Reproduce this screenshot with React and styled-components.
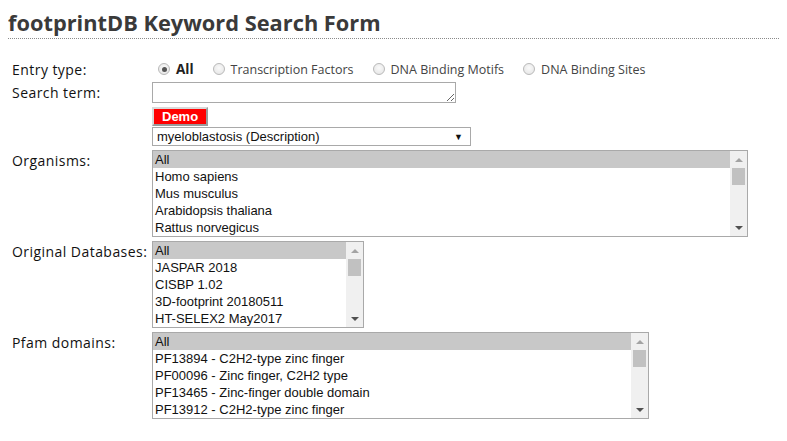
import React from 'react';
import styled, { createGlobalStyle } from 'styled-components';

const GlobalStyle = createGlobalStyle`
  body {
    margin: 8px;
    background: #fff;
    font-family: 'Open Sans', 'Noto Sans', sans-serif;
    color: #222;
  }
`;

const Title = styled.h1`
  margin: 0;
  padding: 0 0 1px;
  font-size: 21.8px;
  line-height: 29px;
  font-weight: 700;
  color: #3a3a3a;
  border-bottom: 1px dotted #8a8a8a;
`;

const Form = styled.form`
  display: flex;
  flex-direction: column;
  gap: 4px;
  margin-top: 20px;
  padding-left: 4px;
`;

const Row = styled.div`
  display: grid;
  grid-template-columns: 140px 1fr;
  align-items: start;
  ${p => (p.$h ? `height: ${p.$h}px;` : '')}
`;

const Label = styled.label`
  font-size: 14px;
  letter-spacing: 0.45px;
  line-height: 20px;
  padding-top: 1px;
  color: #111;
`;

const Radios = styled.div`
  display: flex;
  align-items: center;
  height: 20px;
  gap: 19px;
  padding-left: 6px;
`;

const RadioItem = styled.span`
  display: inline-flex;
  align-items: center;
  gap: 6px;
  font-size: ${p => (p.$bold ? '13.5px' : '12.5px')};
  font-weight: ${p => (p.$bold ? 700 : 400)};
  color: ${p => (p.$bold ? '#222' : '#444')};
`;

const Dot = styled.span`
  box-sizing: border-box;
  width: 12px;
  height: 12px;
  border-radius: 50%;
  border: 1px solid #b9b9b9;
  background: radial-gradient(circle at 50% 40%, #fafafa 0%, #e2e2e2 100%);
  display: inline-flex;
  align-items: center;
  justify-content: center;
  &::after {
    content: '';
    width: ${p => (p.$on ? 5 : 0)}px;
    height: ${p => (p.$on ? 5 : 0)}px;
    border-radius: 50%;
    background: #555;
  }
`;

const Stack = styled.div`
  display: flex;
  flex-direction: column;
  align-items: flex-start;
`;

const TextArea = styled.textarea`
  box-sizing: border-box;
  width: 304px;
  height: 21px;
  margin: 0;
  padding: 1px 2px;
  border: 1px solid #a9a9a9;
  font: 13px 'Liberation Sans', Arial, sans-serif;
  resize: both;
  display: block;
`;

const DemoButton = styled.button`
  box-sizing: border-box;
  margin-top: 4px;
  height: 19px;
  padding: 0 8px;
  background: #ff0000;
  color: #fff;
  font: bold 13px 'Liberation Sans', Arial, sans-serif;
  border: 2px solid;
  border-color: #d9d9d9 #9a9a9a #9a9a9a #d9d9d9;
  line-height: 14px;
`;

const SelectBox = styled.div`
  box-sizing: border-box;
  margin-top: 1px;
  width: 319px;
  height: 19px;
  border: 1px solid #a9a9a9;
  display: flex;
  align-items: center;
  justify-content: space-between;
  padding: 0 7px 0 4px;
  font: 13px 'Liberation Sans', Arial, sans-serif;
  color: #111;
`;

const Caret = styled.span`
  font-size: 9px;
  color: #111;
`;

const ListBox = styled.div`
  box-sizing: border-box;
  width: ${p => p.$w}px;
  height: 87px;
  border: 1px solid #a9a9a9;
  display: flex;
  overflow: hidden;
`;

const Options = styled.div`
  flex: 1;
  min-width: 0;
`;

const Option = styled.div`
  height: 17px;
  padding-left: 2px;
  font: 13px/17px 'Liberation Sans', Arial, sans-serif;
  white-space: nowrap;
  color: #111;
  background: ${p => (p.$selected ? '#c8c8c8' : 'transparent')};
`;

const Track = styled.div`
  width: 17px;
  background: #f0f0f0;
  display: flex;
  flex-direction: column;
  align-items: center;
`;

const Arrow = styled.div`
  height: 17px;
  display: flex;
  align-items: center;
  justify-content: center;
  &::before {
    content: '';
    border-left: 4px solid transparent;
    border-right: 4px solid transparent;
    ${p =>
      p.$up
        ? 'border-bottom: 4px solid #a3a3a3;'
        : 'border-top: 4px solid #505050;'}
  }
`;

const Thumb = styled.div`
  width: 13px;
  height: 17px;
  background: #c1c1c1;
`;

const Spacer = styled.div`
  flex: 1;
`;

const Scrollbar = () => (
  <Track>
    <Arrow $up />
    <Thumb />
    <Spacer />
    <Arrow />
  </Track>
);

const List = ({ width, items }) => (
  <ListBox $w={width}>
    <Options>
      {items.map((it, i) => (
        <Option key={it} $selected={i === 0}>
          {it}
        </Option>
      ))}
    </Options>
    <Scrollbar />
  </ListBox>
);

const organisms = ['All', 'Homo sapiens', 'Mus musculus', 'Arabidopsis thaliana', 'Rattus norvegicus'];
const databases = ['All', 'JASPAR 2018', 'CISBP 1.02', '3D-footprint 20180511', 'HT-SELEX2 May2017'];
const pfam = [
  'All',
  'PF13894 - C2H2-type zinc finger',
  'PF00096 - Zinc finger, C2H2 type',
  'PF13465 - Zinc-finger double domain',
  'PF13912 - C2H2-type zinc finger',
];

export default function App() {
  return (
    <>
      <GlobalStyle />
      <Title>footprintDB Keyword Search Form</Title>
      <Form onSubmit={e => e.preventDefault()}>
        <Row $h={19}>
          <Label>Entry type:</Label>
          <Radios>
            <RadioItem $bold><Dot $on />All</RadioItem>
            <RadioItem><Dot />Transcription Factors</RadioItem>
            <RadioItem><Dot />DNA Binding Motifs</RadioItem>
            <RadioItem><Dot />DNA Binding Sites</RadioItem>
          </Radios>
        </Row>
        <Row>
          <Label>Search term:</Label>
          <Stack>
            <TextArea />
            <DemoButton type="button">Demo</DemoButton>
            <SelectBox>
              <span>myeloblastosis (Description)</span>
              <Caret>▼</Caret>
            </SelectBox>
          </Stack>
        </Row>
        <Row>
          <Label>Organisms:</Label>
          <List width={596} items={organisms} />
        </Row>
        <Row>
          <Label>Original Databases:</Label>
          <List width={212} items={databases} />
        </Row>
        <Row>
          <Label>Pfam domains:</Label>
          <List width={497} items={pfam} />
        </Row>
      </Form>
    </>
  );
}
